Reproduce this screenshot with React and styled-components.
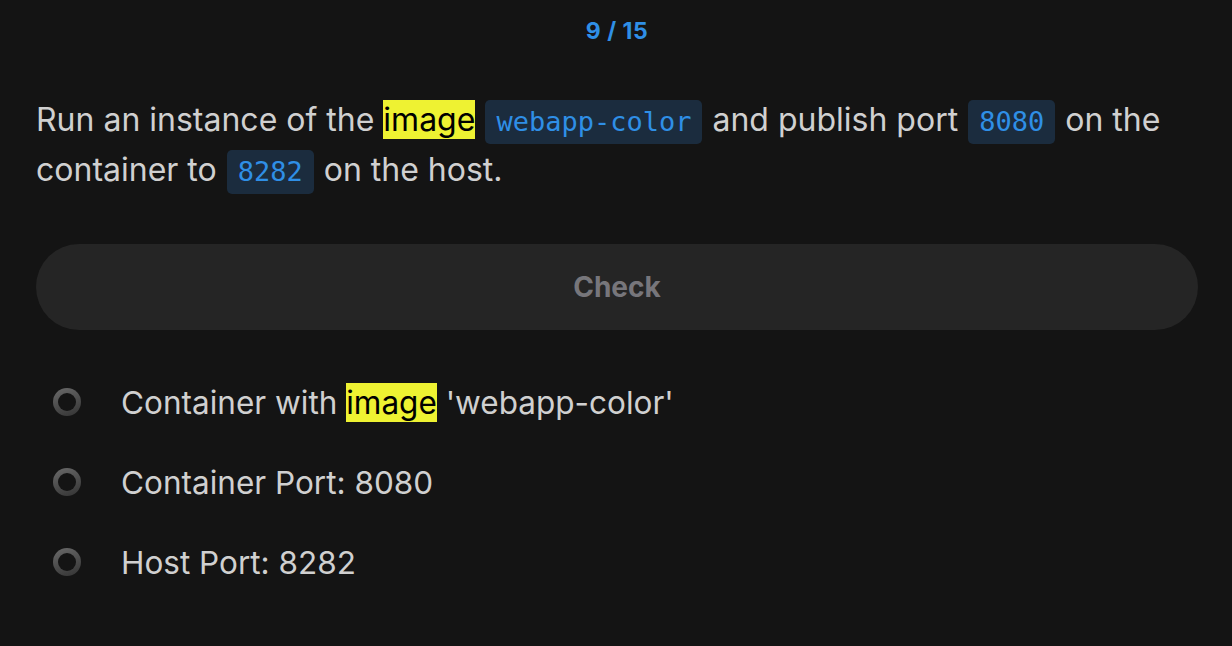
import React from 'react';
import styled, { createGlobalStyle } from 'styled-components';

const GlobalStyle = createGlobalStyle`
    html, body {
        margin: 0;
        padding: 0;
        background: #141414;
    }
    body {
        font-family: Inter, "Noto Sans", sans-serif;
        color: #d2d2d2;
    }
`;

const Page = styled.div`
    min-height: 646px;
    padding: 0 34px 0 36px;
    box-sizing: border-box;
`;

const Counter = styled.div`
    height: 62px;
    display: flex;
    align-items: center;
    justify-content: center;
    font-size: 23px;
    font-weight: 700;
    color: #2f8fe6;
    letter-spacing: 0.5px;
`;

const Prompt = styled.p`
    margin: 33px 0 49px;
    font-size: 32px;
    line-height: 50px;
    color: #d0d0d0;
`;

const Mark = styled.mark`
    background: #eef232;
    color: #000;
`;

const Code = styled.code`
    font-family: "DejaVu Sans Mono", "Liberation Mono", monospace;
    font-size: 27px;
    line-height: 1;
    color: #2f8fe6;
    background: #1b2c3e;
    border-radius: 5px;
    padding: 6px 11px 7px;
    margin: 0 1px;
`;

const CheckButton = styled.button`
    display: block;
    width: 100%;
    height: 86px;
    border: none;
    border-radius: 43px;
    background: #252525;
    color: #77767b;
    font-family: Inter, "Noto Sans", sans-serif;
    font-size: 28px;
    font-weight: 700;
    cursor: pointer;
`;

const List = styled.ul`
    list-style: none;
    margin: 52px 0 0;
    padding: 0;
    display: flex;
    flex-direction: column;
    gap: 40px;
`;

const Item = styled.li`
    display: flex;
    align-items: center;
    height: 40px;
    font-size: 31.5px;
    color: #d0d0d0;
`;

const Radio = styled.span`
    width: 28px;
    height: 28px;
    box-sizing: border-box;
    border-radius: 50%;
    margin: 0 40px 0 17px;
    flex-shrink: 0;
    background: linear-gradient(160deg, #6a6a6a, #333);
    display: flex;
    align-items: center;
    justify-content: center;

    &::after {
        content: '';
        width: 18px;
        height: 18px;
        border-radius: 50%;
        background: #141414;
    }
`;

const tasks = [
    <>Container with <Mark>image</Mark> 'webapp-color'</>,
    'Container Port: 8080',
    'Host Port: 8282',
];

export default function App() {
    return <Page>
        <GlobalStyle />
        <Counter>9 / 15</Counter>
        <Prompt>
            Run an instance of the <Mark>image</Mark> <Code>webapp-color</Code> and publish port <Code>8080</Code> on the container to <Code>8282</Code> on the host.
        </Prompt>
        <CheckButton>Check</CheckButton>
        <List>
            {tasks.map((task, i) => (
                <Item key={i}>
                    <Radio />
                    <span>{task}</span>
                </Item>
            ))}
        </List>
    </Page>;
}
